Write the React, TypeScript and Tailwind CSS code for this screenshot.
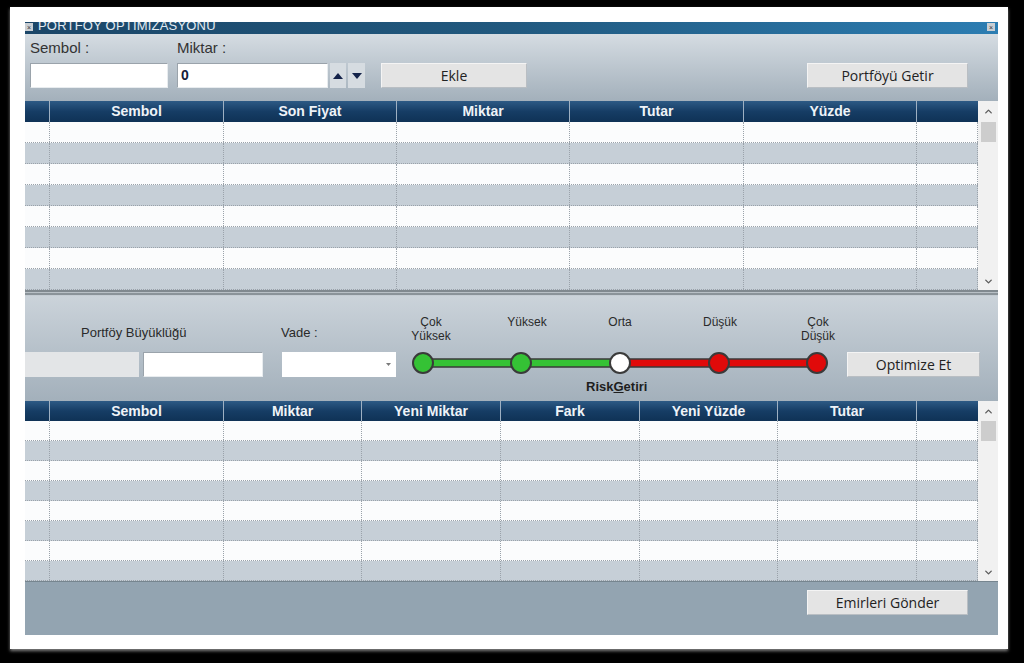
import { ChevronUp, ChevronDown } from 'lucide-react';

const topCols = [
  { name: '', w: 'w-[25px]' },
  { name: 'Sembol', w: 'w-[174px]' },
  { name: 'Son Fiyat', w: 'w-[173px]' },
  { name: 'Miktar', w: 'w-[173px]' },
  { name: 'Tutar', w: 'w-[174px]' },
  { name: 'Yüzde', w: 'w-[173px]' },
  { name: '', w: 'w-[61px]' },
];

const bottomCols = [
  { name: '', w: 'w-[25px]' },
  { name: 'Sembol', w: 'w-[174px]' },
  { name: 'Miktar', w: 'w-[138px]' },
  { name: 'Yeni Miktar', w: 'w-[139px]' },
  { name: 'Fark', w: 'w-[139px]' },
  { name: 'Yeni Yüzde', w: 'w-[138px]' },
  { name: 'Tutar', w: 'w-[139px]' },
  { name: '', w: 'w-[61px]' },
];

const rows = [0, 1, 2, 3, 4, 5, 6, 7];

function Btn({ label, w }: { label: string; w: string }) {
  return (
    <button
      className={`${w} h-[25px] bg-[#e4e4e4] border border-t-[#f4f4f4] border-l-[#f4f4f4] border-r-[#b9bec3] border-b-[#b9bec3] text-[14px] text-[#222] font-['Open_Sans',sans-serif]`}
    >
      {label}
    </button>
  );
}

function Field({ w, children }: { w: string; children?: React.ReactNode }) {
  return (
    <div
      className={`${w} h-[25px] bg-white border border-t-[#9aa3ab] border-l-[#9aa3ab] border-r-[#e8ecef] border-b-[#e8ecef] flex items-center`}
    >
      {children}
    </div>
  );
}

function Grid({
  cols,
  headH,
  rowH,
}: {
  cols: { name: string; w: string }[];
  headH: string;
  rowH: string;
}) {
  return (
    <div className="flex">
      <div className="w-[953px] flex flex-col">
        <div className={`${headH} flex bg-gradient-to-b from-[#2d5a85] via-[#163d65] to-[#0f3256]`}>
          {cols.map((c, i) => (
            <div
              key={i}
              className={`${c.w} h-full flex items-center justify-center border-r border-[#9eb0c2] last:border-r-0 text-[14px] font-bold text-[#eef3f8] font-['Liberation_Sans',Arial,sans-serif]`}
            >
              {c.name}
            </div>
          ))}
        </div>
        {rows.map((r) => (
          <div
            key={r}
            className={`${rowH} flex border-b border-dotted border-[#9aa2aa] ${r % 2 === 0 ? 'bg-[#fbfcfd]' : 'bg-[#c6cfd7]'}`}
          >
            {cols.map((c, i) => (
              <div key={i} className={`${c.w} h-full border-r border-dotted border-[#9aa2aa]`} />
            ))}
          </div>
        ))}
      </div>
      <div className="w-[20px] bg-[#f1f1f1] flex flex-col items-center">
        <div className={`${headH} flex items-center justify-center`}>
          <ChevronUp size={11} strokeWidth={3} color="#5c5c5c" />
        </div>
        <div className="w-[15px] h-[20px] bg-[#cdcdcd]" />
        <div className="flex-1" />
        <div className="h-[18px] flex items-center justify-center">
          <ChevronDown size={11} strokeWidth={3} color="#5c5c5c" />
        </div>
      </div>
    </div>
  );
}

function RiskSlider() {
  const cx = [18, 116, 215, 314, 412];
  const fills = ['#35c235', '#35c235', '#ffffff', '#e00a0a', '#e00a0a'];
  const labels = [
    { t: ['Çok', 'Yüksek'], x: 'left-[-4px]' },
    { t: ['Yüksek'], x: 'left-[92px]' },
    { t: ['Orta'], x: 'left-[185px]' },
    { t: ['Düşük'], x: 'left-[285px]' },
    { t: ['Çok', 'Düşük'], x: 'left-[383px]' },
  ];
  return (
    <div className="relative w-[430px] h-[105px] font-['Liberation_Sans',Arial,sans-serif]">
      {labels.map((l, i) => (
        <div
          key={i}
          className={`absolute top-[19px] ${l.x} w-[60px] text-center text-[12px] leading-[14px] text-[#2a2a2a]`}
        >
          {l.t.map((s) => (
            <div key={s}>{s}</div>
          ))}
        </div>
      ))}
      <svg className="absolute left-0 top-[54px]" width="430" height="26" viewBox="0 0 430 26">
        <rect x="18" y="9" width="197" height="8" fill="#35c235" stroke="#3a3a3a" strokeWidth="1.5" />
        <rect x="215" y="9" width="197" height="8" fill="#e00a0a" stroke="#3a3a3a" strokeWidth="1.5" />
        {cx.map((x, i) => (
          <circle key={i} cx={x} cy="13" r="10" fill={fills[i]} stroke="#3a3a3a" strokeWidth="2" />
        ))}
      </svg>
      <div className="absolute top-[83px] left-[181px] text-[13px] leading-[16px] text-[#1e1e1e] font-semibold">
        Risk<span className="underline">G</span>etiri
      </div>
    </div>
  );
}

export default function App() {
  return (
    <div className="w-[1024px] h-[663px] bg-black overflow-hidden pt-[7px] pl-[10px]">
      <div className="w-[998px] h-[642px] bg-white pt-[15px] pl-[15px] shadow-[0_2px_3px_rgba(160,160,160,0.8)]">
        <div className="w-[973px] h-[613px] flex flex-col font-['Liberation_Sans',Arial,sans-serif]">
          {/* title bar */}
          <div className="h-[12px] flex items-start bg-gradient-to-r from-[#1b4668] via-[#21597f] to-[#2c7db2] overflow-hidden">
            <div className="w-[8px] h-[8px] mt-[1px] bg-[#c9ced3] flex items-center justify-center text-[7px] leading-none text-[#333]">
              ×
            </div>
            <div className="ml-[5px] -mt-[4px] text-[13px] leading-[16px] text-[#e3ebf2] tracking-[0.2px]">
              PORTFÖY OPTİMİZASYONU
            </div>
            <div className="ml-auto mr-[3px] mt-[1px] w-[8px] h-[8px] bg-[#c9ced3] flex items-center justify-center text-[7px] leading-none text-[#333]">
              ×
            </div>
          </div>

          {/* entry controls */}
          <div className="h-[67px] flex items-start pl-[5px] pt-[5px] bg-gradient-to-b from-[#d5dce2] to-[#a3b0bb]">
            <div className="flex flex-col">
              <div className="h-[18px] text-[15px] leading-[18px] text-[#333]">Sembol :</div>
              <div className="mt-[6px]">
                <Field w="w-[138px]" />
              </div>
            </div>
            <div className="flex flex-col ml-[9px]">
              <div className="h-[18px] text-[15px] leading-[18px] text-[#333]">Miktar :</div>
              <div className="mt-[6px] flex">
                <Field w="w-[151px]">
                  <span className="pl-[3px] text-[14px] font-bold text-[#14203a]">0</span>
                </Field>
                <div className="ml-[2px] w-[16px] h-[25px] bg-[#d6dce1] flex items-center justify-center">
                  <svg width="10" height="6" viewBox="0 0 10 6">
                    <path d="M0 6 L5 0 L10 6 Z" fill="#14234a" />
                  </svg>
                </div>
                <div className="ml-[2px] w-[17px] h-[25px] bg-[#d6dce1] flex items-center justify-center">
                  <svg width="10" height="6" viewBox="0 0 10 6">
                    <path d="M0 0 L10 0 L5 6 Z" fill="#14234a" />
                  </svg>
                </div>
              </div>
            </div>
            <div className="ml-[16px] mt-[24px]">
              <Btn label="Ekle" w="w-[146px]" />
            </div>
            <div className="ml-auto mr-[30px] mt-[24px]">
              <Btn label="Portföyü Getir" w="w-[161px]" />
            </div>
          </div>

          <Grid cols={topCols} headH="h-[21px]" rowH="h-[21px]" />

          {/* splitter */}
          <div className="h-[6px] flex flex-col">
            <div className="h-[2px] bg-[#80898f]" />
            <div className="h-[1px] bg-[#b8c0c6]" />
            <div className="h-[2px] bg-[#8a9399]" />
            <div className="h-[1px] bg-[#c4ccd3]" />
          </div>

          {/* optimisation controls */}
          <div className="h-[105px] flex items-start bg-gradient-to-b from-[#cbd3da] to-[#a3b0bb]">
            <div className="w-[238px] flex flex-col">
              <div className="pt-[29px] pl-[56px] text-[13px] leading-[16px] text-[#2a2a2a]">Portföy Büyüklüğü</div>
              <div className="mt-[11px] flex">
                <div className="w-[114px] h-[25px] bg-[#e3e5e7]" />
                <div className="ml-[4px]">
                  <Field w="w-[120px]" />
                </div>
              </div>
            </div>
            <div className="ml-[18px] flex flex-col">
              <div className="pt-[29px] text-[13px] leading-[16px] text-[#2a2a2a]">Vade :</div>
              <div className="mt-[11px] ml-[1px] w-[114px] h-[25px] bg-white flex items-center justify-end pr-[5px]">
                <svg width="5" height="3" viewBox="0 0 5 3">
                  <path d="M0 0 L5 0 L2.5 3 Z" fill="#7a7a7a" />
                </svg>
              </div>
            </div>
            <div className="ml-[9px]">
              <RiskSlider />
            </div>
            <div className="ml-[12px] mt-[56px]">
              <Btn label="Optimize Et" w="w-[133px]" />
            </div>
          </div>

          <Grid cols={bottomCols} headH="h-[20px]" rowH="h-[20px]" />

          {/* footer */}
          <div className="h-[54px] bg-[#93a4b1] border-t border-[#76858f] flex justify-end items-start pr-[30px] pt-[8px]">
            <Btn label="Emirleri Gönder" w="w-[161px]" />
          </div>
        </div>
      </div>
    </div>
  );
}
